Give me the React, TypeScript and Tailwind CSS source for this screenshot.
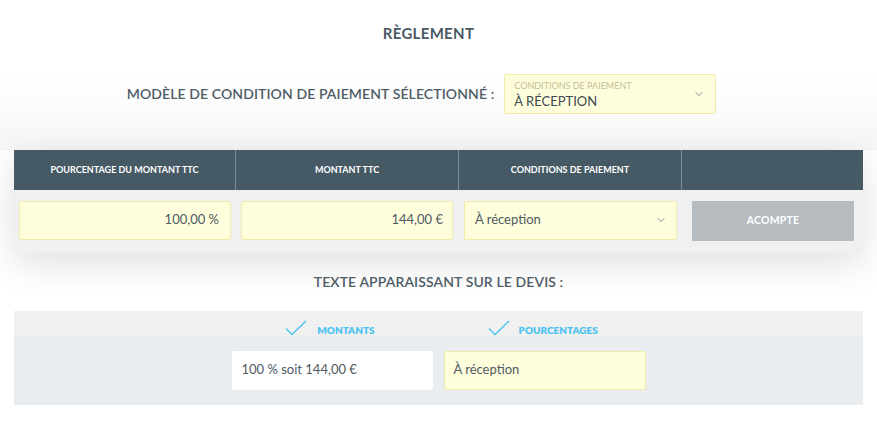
import { ChevronDown } from "lucide-react"

const font = { fontFamily: "Lato, 'Noto Sans', sans-serif" }

function Check() {
  return (
    <svg width="22" height="16" viewBox="0 0 22 16" fill="none">
      <path d="M1 8.5 L7 14.5 L21 1" stroke="#4cc3f0" strokeWidth="1.4" />
    </svg>
  )
}

export default function App() {
  return (
    <div className="w-[877px] h-[429px] bg-white text-[#4a5a66] overflow-hidden" style={font}>
      <div className="bg-gradient-to-b from-white from-50% to-[#f6f6f6] pt-[22px] pb-[36px]">
        <h2 className="text-center text-[15px] font-bold tracking-[0.3px] text-[#4a5963] pr-[20px]">RÈGLEMENT</h2>
        <div className="flex items-center justify-center gap-[10px] mt-[29px] pr-[34px]">
          <span className="text-[14px] font-semibold text-[#4e5c66] tracking-[0.1px]">MODÈLE DE CONDITION DE PAIEMENT SÉLECTIONNÉ :</span>
          <div className="relative w-[212px] h-[40px] bg-[#fffedc] border border-[#f1eba9] rounded-[2px] pl-[9px] pt-[5px]">
            <div className="text-[9px] text-[#c3bd98] leading-[11px]">CONDITIONS DE PAIEMENT</div>
            <div className="text-[13px] text-[#3f4a52] leading-[17px] mt-[2px]">À RÉCEPTION</div>
            <ChevronDown className="absolute right-[10px] top-[13px] text-[#5a6770]" size={12} strokeWidth={1.5} />
          </div>
        </div>
      </div>

      <div className="mx-[14px] shadow-[0_10px_36px_rgba(0,0,0,0.13)]">
        <div className="grid grid-cols-[222px_223px_223px_1fr] h-[40px] bg-[#465a66] text-white text-[9px] font-bold">
          <div className="flex items-center justify-center border-r border-[#7d8e99]">POURCENTAGE DU MONTANT TTC</div>
          <div className="flex items-center justify-center border-r border-[#7d8e99]">MONTANT TTC</div>
          <div className="flex items-center justify-center border-r border-[#7d8e99]">CONDITIONS DE PAIEMENT</div>
          <div />
        </div>
        <div className="flex items-start bg-[#f0f0f0] h-[63px] pt-[11px] px-[5px] text-[13px] text-[#4e5a62]">
          <div className="w-[212px] h-[39px] bg-[#fffedc] border border-[#f1eba9] rounded-[2px] flex items-center justify-end pr-[11px]">100,00 %</div>
          <div className="w-[212px] h-[39px] ml-[10px] bg-[#fffedc] border border-[#f1eba9] rounded-[2px] flex items-center justify-end pr-[9px]">144,00 €</div>
          <div className="w-[213px] h-[39px] ml-[11px] bg-[#fffedc] border border-[#f1eba9] rounded-[2px] flex items-center justify-between pl-[10px] pr-[9px]">
            <span>À réception</span>
            <ChevronDown className="text-[#5a6770]" size={12} strokeWidth={1.5} />
          </div>
          <button className="w-[162px] h-[40px] ml-[15px] bg-[#b5bbbf] text-white text-[10.5px] font-bold tracking-[0.2px]">ACOMPTE</button>
        </div>
      </div>

      <div className="text-center text-[14px] font-semibold text-[#4e5c66] mt-[18px] tracking-[0.1px]">TEXTE APPARAISSANT SUR LE DEVIS :</div>

      <div className="mx-[14px] mt-[19px]">
        <div className="bg-[#f0f0f0] h-[26px] flex items-start justify-center gap-[113px] pt-[9px] pl-[6px] text-[10px] font-extrabold text-[#4cc3f0]">
          <div className="flex items-start gap-[10px]">
            <Check />
            <span className="mt-[4px] leading-[12px]">MONTANTS</span>
          </div>
          <div className="flex items-start gap-[9px]">
            <Check />
            <span className="mt-[4px] leading-[12px]">POURCENTAGES</span>
          </div>
        </div>
        <div className="bg-[#e9edf0] h-[68px] flex justify-center gap-[11px] pt-[14px] text-[13px] text-[#4e5a62]">
          <div className="w-[201px] h-[39px] bg-white rounded-[2px] flex items-center pl-[10px]">100 % soit 144,00 €</div>
          <div className="w-[202px] h-[39px] bg-[#fffedc] border border-[#f1eba9] rounded-[2px] flex items-center pl-[9px]">À réception</div>
        </div>
      </div>
    </div>
  )
}
